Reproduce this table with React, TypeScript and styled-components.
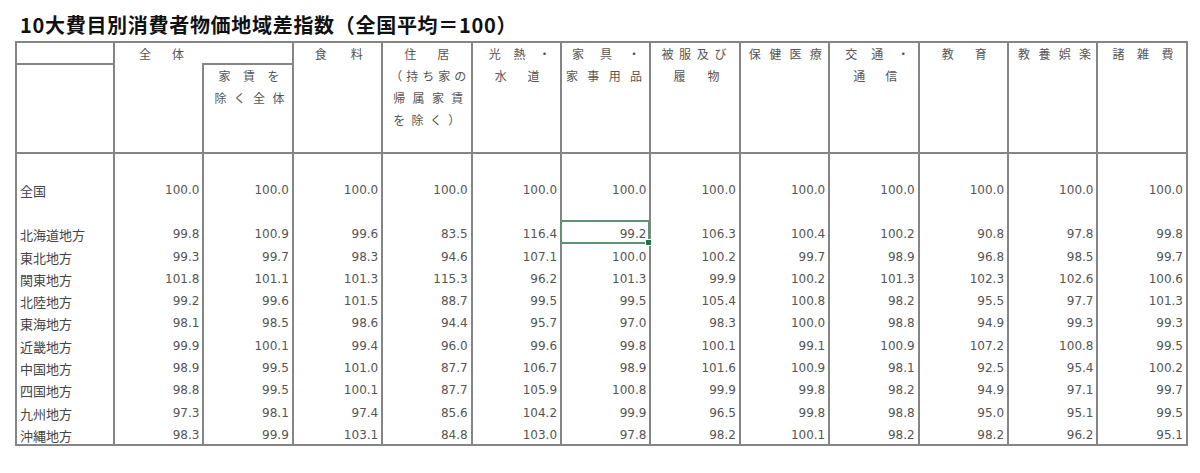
import styled, { createGlobalStyle } from "styled-components";

type Line = { t: string; x: number; w: number };

const headers: Line[][] = [
   [{ t: "食料", x: 21, w: 48 }],
   [
      { t: "住居", x: 21, w: 45 },
      { t: "（持ち家の", x: 7, w: 76 },
      { t: "帰属家賃", x: 10, w: 70 },
      { t: "を除く）", x: 10, w: 67 },
   ],
   [
      { t: "光熱・", x: 16, w: 62 },
      { t: "水道", x: 22, w: 45 },
   ],
   [
      { t: "家具・", x: 10, w: 68 },
      { t: "家事用品", x: 4, w: 76 },
   ],
   [
      { t: "被服及び", x: 10, w: 65 },
      { t: "履物", x: 22, w: 46 },
   ],
   [{ t: "保健医療", x: 8, w: 73 }],
   [
      { t: "交通・", x: 15, w: 64 },
      { t: "通信", x: 23, w: 44 },
   ],
   [{ t: "教育", x: 22, w: 45 }],
   [{ t: "教養娯楽", x: 9, w: 73 }],
   [{ t: "諸雑費", x: 14, w: 61 }],
];

const rows: [string, string[]][] = [
   ["北海道地方", ["99.8", "100.9", "99.6", "83.5", "116.4", "99.2", "106.3", "100.4", "100.2", "90.8", "97.8", "99.8"]],
   ["東北地方", ["99.3", "99.7", "98.3", "94.6", "107.1", "100.0", "100.2", "99.7", "98.9", "96.8", "98.5", "99.7"]],
   ["関東地方", ["101.8", "101.1", "101.3", "115.3", "96.2", "101.3", "99.9", "100.2", "101.3", "102.3", "102.6", "100.6"]],
   ["北陸地方", ["99.2", "99.6", "101.5", "88.7", "99.5", "99.5", "105.4", "100.8", "98.2", "95.5", "97.7", "101.3"]],
   ["東海地方", ["98.1", "98.5", "98.6", "94.4", "95.7", "97.0", "98.3", "100.0", "98.8", "94.9", "99.3", "99.3"]],
   ["近畿地方", ["99.9", "100.1", "99.4", "96.0", "99.6", "99.8", "100.1", "99.1", "100.9", "107.2", "100.8", "99.5"]],
   ["中国地方", ["98.9", "99.5", "101.0", "87.7", "106.7", "98.9", "101.6", "100.9", "98.1", "92.5", "95.4", "100.2"]],
   ["四国地方", ["98.8", "99.5", "100.1", "87.7", "105.9", "100.8", "99.9", "99.8", "98.2", "94.9", "97.1", "99.7"]],
   ["九州地方", ["97.3", "98.1", "97.4", "85.6", "104.2", "99.9", "96.5", "99.8", "98.8", "95.0", "95.1", "99.5"]],
   ["沖縄地方", ["98.3", "99.9", "103.1", "84.8", "103.0", "97.8", "98.2", "100.1", "98.2", "98.2", "96.2", "95.1"]],
];

const LINE = "2px solid #858585";

function HeadLines({ lines }: { lines: Line[] }) {
   return (
      <>
         {lines.map((l) => (
            <Label key={l.t} $x={l.x} $w={l.w}>
               {l.t}
            </Label>
         ))}
      </>
   );
}

export default function App() {
   return (
      <Page>
         <GlobalStyle />
         <Title>10大費目別消費者物価地域差指数（全国平均＝100）</Title>
         <Table>
            <colgroup>
               <col style={{ width: 98 }} />
               {Array.from({ length: 12 }).map((_, i) => (
                  <col key={i} />
               ))}
            </colgroup>
            <thead>
               <tr>
                  <Head $h={20} />
                  <Head rowSpan={2} $noRight>
                     <HeadLines lines={[{ t: "全体", x: 24, w: 45 }]} />
                  </Head>
                  <Head $noLeft />
                  {headers.map((h, i) => (
                     <Head key={i} rowSpan={2}>
                        <HeadLines lines={h} />
                     </Head>
                  ))}
               </tr>
               <tr>
                  <Head $h={87} />
                  <Head>
                     <HeadLines
                        lines={[
                           { t: "家賃を", x: 14, w: 61 },
                           { t: "除く全体", x: 10, w: 70 },
                        ]}
                     />
                  </Head>
               </tr>
            </thead>
            <tbody>
               <tr>
                  <Name $h={45}>全国</Name>
                  {Array.from({ length: 12 }).map((_, i) => (
                     <Num key={i}>100.0</Num>
                  ))}
               </tr>
               <tr>
                  <Name $h={22} />
                  {Array.from({ length: 12 }).map((_, i) => (
                     <Num key={i} />
                  ))}
               </tr>
               {rows.map(([name, values], r) => (
                  <tr key={name}>
                     <Name $h={22.3}>{name}</Name>
                     {values.map((v, i) => {
                        const selected = r === 0 && i === 5;
                        return (
                           <Num key={i} $selected={selected}>
                              {v}
                              {selected && (
                                 <Selection>
                                    <Handle />
                                 </Selection>
                              )}
                           </Num>
                        );
                     })}
                  </tr>
               ))}
            </tbody>
         </Table>
      </Page>
   );
}

const GlobalStyle = createGlobalStyle`
   html, body {
      margin: 0;
      padding: 0;
      background: #ffffff;
   }
   body {
      font-family: "Noto Sans CJK JP", "Noto Sans", sans-serif;
      color: #444;
   }
`;

const Page = styled.div`
   width: 1200px;
   height: 473px;
   padding: 13px 0 0 15px;
   box-sizing: border-box;
   overflow: hidden;
`;

const Title = styled.h1`
   margin: 0 0 4px 5px;
   font-family: "Noto Sans CJK JP", sans-serif;
   font-size: 20px;
   line-height: 24px;
   font-weight: 700;
   letter-spacing: 0.7px;
   color: #111;
`;

const Table = styled.table`
   border-collapse: collapse;
   table-layout: fixed;
   width: 1173px;
   border: ${LINE};
`;

const Head = styled.th<{ $h?: number; $noRight?: boolean; $noLeft?: boolean }>`
   height: ${({ $h }) => ($h ? `${$h}px` : "auto")};
   padding: 0;
   vertical-align: top;
   text-align: left;
   font-family: "Noto Sans CJK JP", sans-serif;
   font-weight: 400;
   font-size: 12px;
   line-height: 22px;
   color: #555;
   border-top: ${LINE};
   border-bottom: ${LINE};
   border-left: ${({ $noLeft }) => ($noLeft ? "none" : LINE)};
   border-right: ${({ $noRight }) => ($noRight ? "none" : LINE)};
`;

const Label = styled.div<{ $x: number; $w: number }>`
   margin-left: ${({ $x }) => $x}px;
   width: ${({ $w }) => $w}px;
   text-align: justify;
   text-align-last: justify;
   white-space: nowrap;
`;

const Name = styled.td<{ $h?: number }>`
   height: ${({ $h }) => ($h ? `${$h}px` : "auto")};
   padding: 0 0 0 3px;
   vertical-align: bottom;
   font-family: "Noto Sans CJK JP", sans-serif;
   font-size: 13px;
   line-height: 17px;
   color: #444;
   border-left: ${LINE};
   border-right: ${LINE};
`;

const Num = styled.td<{ $selected?: boolean }>`
   position: ${({ $selected }) => ($selected ? "relative" : "static")};
   padding: 0 3px 0 0;
   vertical-align: bottom;
   text-align: right;
   font-family: "DejaVu Sans", sans-serif;
   font-size: 12px;
   line-height: 17px;
   color: #555;
   border-left: ${LINE};
   border-right: ${LINE};
`;

const Selection = styled.div`
   position: absolute;
   inset: -1px -1px -1px -2px;
   border: 2px solid #5c9474;
   pointer-events: none;
`;

const Handle = styled.div`
   position: absolute;
   right: -4px;
   bottom: -4px;
   width: 5px;
   height: 5px;
   background: #217346;
   border: 1px solid #fff;
`;
